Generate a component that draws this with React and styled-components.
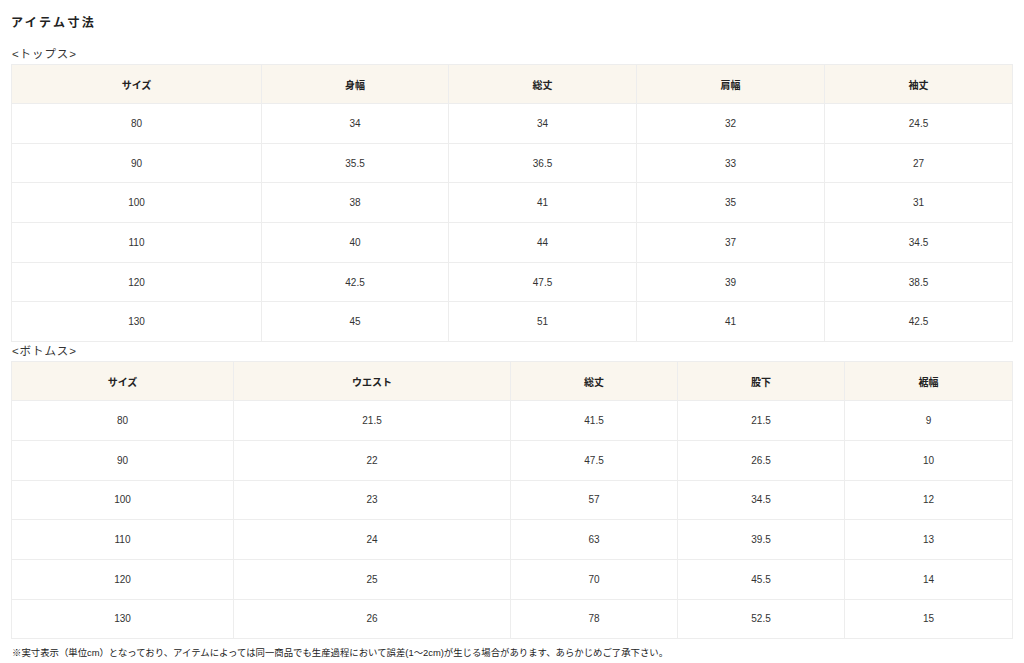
import React from "react";
import styled, { createGlobalStyle } from "styled-components";

const Global = createGlobalStyle`
  html, body { margin: 0; padding: 0; background: #fff; }
  body { font-family: "Liberation Sans", "Noto Sans CJK JP", sans-serif; color: #222; }
`;

const Page = styled.div`
  padding: 15px 12px 0 11px;
  width: 1001px;
`;

const Title = styled.h2`
  margin: 0;
  font-size: 12px;
  line-height: 16px;
  font-weight: 700;
  letter-spacing: 2.4px;
  color: #222;
`;

const SubTitle = styled.div`
  font-size: 11.5px;
  line-height: 14px;
  margin: ${(p) => p.$top}px 0 3px 1px;
  color: #333;
  letter-spacing: 0.9px;
`;

const Table = styled.table`
  width: 1001px;
  border-collapse: collapse;
  table-layout: fixed;
`;

const HeadCell = styled.th`
  background: #faf6ee;
  border: 1px solid #ededed;
  height: 38px;
  padding: 0;
  font-size: 10px;
  font-weight: 700;
  color: #222;
  text-align: center;
`;

const Cell = styled.td`
  border: 1px solid #ededed;
  height: 38.7px;
  padding: 0;
  font-size: 10px;
  color: #333;
  text-align: center;
`;

const Note = styled.p`
  margin: 8px 0 0 1px;
  font-size: 9.4px;
  line-height: 12px;
  color: #222;
`;

const tops = {
  widths: [250, 187, 188, 188, 188],
  head: ["サイズ", "身幅", "総丈", "肩幅", "袖丈"],
  rows: [
    ["80", "34", "34", "32", "24.5"],
    ["90", "35.5", "36.5", "33", "27"],
    ["100", "38", "41", "35", "31"],
    ["110", "40", "44", "37", "34.5"],
    ["120", "42.5", "47.5", "39", "38.5"],
    ["130", "45", "51", "41", "42.5"],
  ],
};

const bottoms = {
  widths: [222, 277, 167, 167, 168],
  head: ["サイズ", "ウエスト", "総丈", "股下", "裾幅"],
  rows: [
    ["80", "21.5", "41.5", "21.5", "9"],
    ["90", "22", "47.5", "26.5", "10"],
    ["100", "23", "57", "34.5", "12"],
    ["110", "24", "63", "39.5", "13"],
    ["120", "25", "70", "45.5", "14"],
    ["130", "26", "78", "52.5", "15"],
  ],
};

function SizeTable({ data }) {
  return (
    <Table>
      <colgroup>
        {data.widths.map((w, i) => (
          <col key={i} style={{ width: w }} />
        ))}
      </colgroup>
      <thead>
        <tr>
          {data.head.map((h) => (
            <HeadCell key={h}>{h}</HeadCell>
          ))}
        </tr>
      </thead>
      <tbody>
        {data.rows.map((r, i) => (
          <tr key={i}>
            {r.map((c, j) => (
              <Cell key={j}>{c}</Cell>
            ))}
          </tr>
        ))}
      </tbody>
    </Table>
  );
}

export default function App() {
  return (
    <Page>
      <Global />
      <Title>アイテム寸法</Title>
      <SubTitle $top={16}>&lt;トップス&gt;</SubTitle>
      <SizeTable data={tops} />
      <SubTitle $top={2}>&lt;ボトムス&gt;</SubTitle>
      <SizeTable data={bottoms} />
      <Note>
        ※実寸表示（単位cm）となっており、アイテムによっては同一商品でも生産過程において誤差(1〜2cm)が生じる場合があります、あらかじめご了承下さい。
      </Note>
    </Page>
  );
}
